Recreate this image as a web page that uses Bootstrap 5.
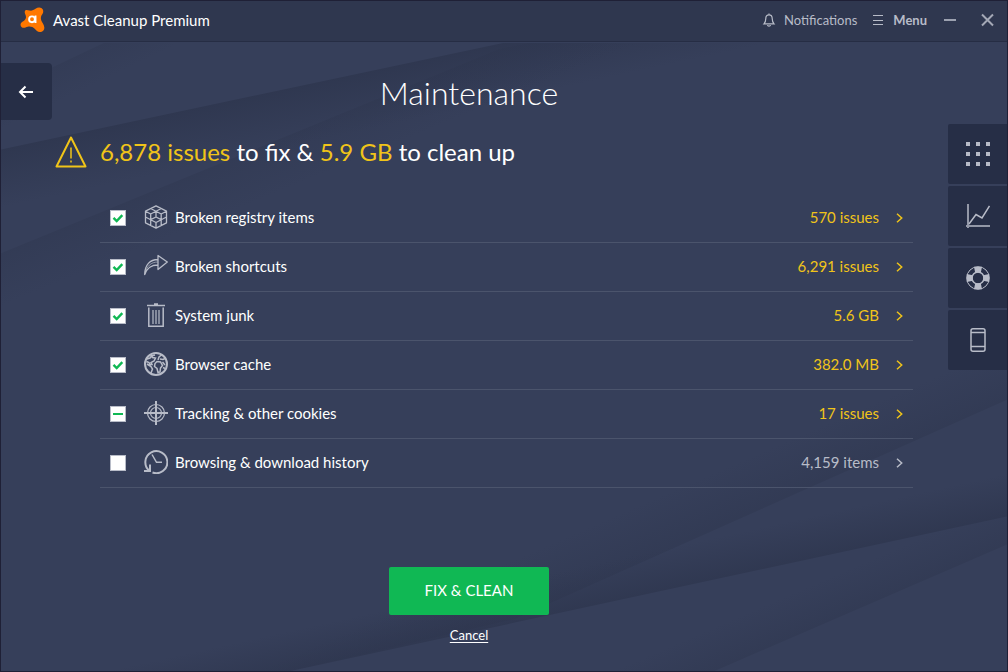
<!DOCTYPE html>
<html lang="en">
<head>
<meta charset="utf-8">
<meta name="viewport" content="width=device-width, initial-scale=1">
<title>Avast Cleanup Premium</title>
<link rel="stylesheet" href="https://cdn.jsdelivr.net/npm/bootstrap@5.3.0/dist/css/bootstrap.min.css">
<style>
  :root { --base: #363f5a; --bar: #2f374f; --tile: #262e46; --edge: #1f2036; --rule: #4b546c; --soft: #b8bcc8; --gold: #f0c419; --go: #10b854; }
  body { font-family: Lato, "Open Sans", sans-serif; font-size: 15px; line-height: 20px; color: #fff; background: var(--base); }
  .app-window { border: 1px solid var(--edge); background: var(--base); isolation: isolate; }
  .title-bar { background: var(--bar); border-bottom: 1px solid #262d44; height: 41px; padding: 0 13px 2px 19px; }
  .bar-btn { display: flex; align-items: center; padding: 0; border: 0; background: none; color: var(--soft); font-size: 13px; }
  .bar-menu { margin-left: 14px; }
  .backdrop { z-index: -1; }
  .back-btn { width: 51px; height: 57px; margin-top: 21px; padding: 0 2px 4px 0; border: 0; border-radius: 0 4px 4px 0; background: var(--tile); }
  .content { padding-top: 29px; }
  .page-title { margin: 0 62px 20px 0; font-size: 32px; line-height: 44px; font-weight: 300; }
  .summary { gap: 13px; height: 33px; margin: 0 0 26px 3px; font-size: 24px; line-height: 32px; font-weight: 400; }
  .gold { color: var(--gold); }
  .issues { margin: 0 35px 79px 48px; }
  .issue-row { height: 49px; padding: 0 10px; border-bottom: 1px solid var(--rule); }
  .issue-row .form-check-input { width: 16px; height: 16px; margin: 0 18px 0 0; border: 1px solid var(--soft); border-radius: 0; background-color: #fff; }
  .issue-row .form-check-input:checked { background-color: #fff; background-size: 14px; background-image: url("data:image/svg+xml,%3csvg xmlns='http://www.w3.org/2000/svg' viewBox='0 0 14 14'%3e%3cpath fill='none' stroke='%2310b854' stroke-width='2.400' d='m2.500 6.800 3.200 3.200 5.600-5.800'/%3e%3c/svg%3e"); }
  .issue-row .form-check-input:indeterminate { background-color: #fff; border-color: var(--soft); background-size: 14px; background-image: url("data:image/svg+xml,%3csvg xmlns='http://www.w3.org/2000/svg' viewBox='0 0 14 14'%3e%3cpath fill='none' stroke='%2310b854' stroke-width='2' d='M2 7h10'/%3e%3c/svg%3e"); }
  .issue-row label { gap: 7px; padding-bottom: 2px; }
  .issue-row a { gap: 17px; padding-bottom: 2px; color: var(--gold); }
  .issue-row a svg { margin-top: 2px; }
  .issue-row a.quiet { color: var(--soft); }
  .ic { fill: none; stroke: var(--soft); flex: none; }
  .actions { margin-right: 62px; gap: 10px; padding-bottom: 24px; }
  .fix-btn { width: 160px; height: 48px; padding: 0 0 2px; border-radius: 2px; background: var(--go); color: #fff; font-size: 15px; }
  .fix-btn:hover { background: #0fa84d; color: #fff; }
  .cancel-link { font-size: 13px; color: #fff; text-underline-offset: 2px; }
  .side-tabs { width: 59px; margin-top: 82px; gap: 2px; }
  .side-tabs button { height: 60px; border: 0; border-radius: 2px 0 0 2px; background: var(--tile); }
</style>
</head>
<body>
<div class="app-window min-vh-100 d-flex flex-column position-relative">
  <svg class="backdrop position-absolute top-0 start-0 w-100 h-100" viewBox="0 0 1008 672" preserveAspectRatio="none" aria-hidden="true">
    <defs>
      <linearGradient id="ga" gradientUnits="userSpaceOnUse" x1="0" y1="149" x2="12" y2="205"><stop stop-color="#2d354d" stop-opacity=".75"/><stop offset="1" stop-color="#2d354d" stop-opacity="0"/></linearGradient>
      <linearGradient id="gb" gradientUnits="userSpaceOnUse" x1="0" y1="253" x2="19" y2="299"><stop stop-color="#2d354d" stop-opacity=".35"/><stop offset="1" stop-color="#2d354d" stop-opacity="0"/></linearGradient>
      <linearGradient id="gc" gradientUnits="userSpaceOnUse" x1="1008" y1="400" x2="988" y2="354"><stop stop-color="#2d354d" stop-opacity=".4"/><stop offset="1" stop-color="#2d354d" stop-opacity="0"/></linearGradient>
      <linearGradient id="gd" gradientUnits="userSpaceOnUse" x1="1008" y1="517" x2="999" y2="476"><stop stop-color="#2d354d" stop-opacity=".7"/><stop offset="1" stop-color="#2d354d" stop-opacity="0"/></linearGradient>
      <linearGradient id="ge" gradientUnits="userSpaceOnUse" x1="1008" y1="545" x2="992" y2="508"><stop stop-color="#2d354d" stop-opacity=".4"/><stop offset="1" stop-color="#2d354d" stop-opacity="0"/></linearGradient>
      <linearGradient id="gf" gradientUnits="userSpaceOnUse" x1="0" y1="91" x2="15" y2="122"><stop stop-color="#2d354d" stop-opacity=".3"/><stop offset="1" stop-color="#2d354d" stop-opacity="0"/></linearGradient>
    </defs>
    <path fill="url(#gf)" d="M0 91 103 42H503L0 149z"/>
    <path fill="url(#ga)" d="M0 149 503 42H1008V300H0z"/>
    <path fill="url(#gb)" d="M0 253 500 48 530 42H1008V350H0z"/>
    <path fill="url(#gc)" d="M1008 400 514 620 290 672H0V300H1008z"/>
    <path fill="url(#gd)" d="M1008 517 290 672H0V400H1008z"/>
    <path fill="url(#ge)" d="M1008 545 715 672H290L1008 517z"/>
  </svg>

  <header class="title-bar d-flex align-items-center">
    <svg width="25" height="26" viewBox="0 0 25 26" class="me-2 flex-shrink-0" aria-hidden="true">
      <path fill="#ff7800" d="M5.500 3.200C6.500 2.600 7.800 3 9.500 3.500c2 .5 4-.2 6-1.700C17.500.3 20 0 21.700 1.300c2 1.500 2 4 .6 6-1.300 1.800-1.900 3.500-1 6.200.7 2.300 2.700 3.800 3 6.700.3 2.800-1.700 4.800-4.400 4.800-2.500 0-3.500-1.500-5.200-3.200-2-2-4.300-2.600-7-2-2.200.5-3.700 1.600-5.700.6-2-1.200-2-4 0-5.400 1.800-1.200 3.700-2 4-4.500.2-2.200-1.200-3.700-1.300-5.300 0-1 .3-1.600.8-2z"/>
      <ellipse cx="12" cy="12.300" rx="2.900" ry="2.900" fill="none" stroke="#fff" stroke-width="1.900"/>
      <path fill="none" stroke="#fff" stroke-width="1.900" d="M15.500 8.500v7.500"/>
    </svg>
    <span class="me-auto">Avast Cleanup Premium</span>
    <button type="button" class="bar-btn">
      <svg class="ic me-2" width="14" height="14" viewBox="0 0 14 14"><path stroke-width="1.200" d="M7 1.800c-2.300 0-3.200 1.500-3.200 3.700 0 3-.6 4-1.800 5.300h10c-1.200-1.300-1.800-2.300-1.800-5.300 0-2.200-.9-3.700-3.200-3.700zM7 .5v1.500M5.500 12c.3 1.500 2.700 1.500 3 0"/></svg>
      Notifications</button>
    <button type="button" class="bar-btn bar-menu fw-bold">
      <svg class="ic me-2" width="14" height="12" viewBox="0 0 14 12"><path d="M2 1.500h10M2 6.500h10M2 10.500h10"/></svg>
      Menu</button>
    <button type="button" class="bar-btn ms-3" aria-label="Minimize"><svg class="ic" width="14" height="14" viewBox="0 0 14 14"><path stroke-width="2" stroke-opacity=".8" d="M1 7h12"/></svg></button>
    <button type="button" class="bar-btn ms-4" aria-label="Close"><svg class="ic" width="13" height="14" viewBox="0 0 13 14"><path stroke-width="2" stroke-opacity=".85" d="m1 1.500 11 11m0-11-11 11"/></svg></button>
  </header>

  <main class="d-flex flex-grow-1">
    <button type="button" class="back-btn flex-shrink-0" aria-label="Back">
      <svg width="16" height="14" viewBox="0 0 16 14" fill="none" stroke="#fff" stroke-width="2"><path d="M15 7H2M7.500 1.500 2 7l5.500 5.500"/></svg>
    </button>

    <section class="content flex-grow-1 d-flex flex-column">
      <h1 class="page-title text-center">Maintenance</h1>
      <h2 class="summary d-flex align-items-center">
        <svg width="32" height="32" viewBox="0 0 32 32" fill="none" stroke="#f0c419" stroke-width="2" class="flex-shrink-0" aria-hidden="true"><path stroke-linejoin="round" d="M16 1.500 1.500 30.500h29z"/><path stroke-width="1.500" d="M16 11.500v11M16 24.500v2"/></svg>
        <span><span class="gold">6,878 issues</span> to fix &amp; <span class="gold">5.9 GB</span> to clean up</span>
      </h2>

      <div class="issues">
        <div class="issue-row d-flex align-items-center">
          <input class="form-check-input" type="checkbox" id="registry" checked>
          <label for="registry" class="d-flex align-items-center flex-grow-1">
            <svg class="ic" width="24" height="24" viewBox="0 0 24 24"><path stroke-width="1.300" stroke-linejoin="round" d="M12 .8 22.500 6.200v11.600L12 23.200 1.500 17.800V6.200zM6.700 3.500 17.200 9v11.500M17.300 3.500 6.700 9v11.500M1.500 6.200 6.700 9M22.500 6.200 17.200 9M1.500 12l10.500 5.500L22.500 12M12 17.500v5.700M12 6.300V12M6.700 14.700 12 12l5.200 2.700"/></svg>
            Broken registry items</label>
          <a href="#registry" class="d-flex align-items-center text-decoration-none">570 issues <svg width="7" height="10" viewBox="0 0 7 10" fill="none" stroke="currentColor" stroke-width="1.500"><path d="m1 .8 4.700 4.200L1 9.200"/></svg></a>
        </div>
        <div class="issue-row d-flex align-items-center">
          <input class="form-check-input" type="checkbox" id="shortcuts" checked>
          <label for="shortcuts" class="d-flex align-items-center flex-grow-1">
            <svg class="ic" width="24" height="24" viewBox="0 0 24 24"><path stroke-width="1.300" stroke-linejoin="round" d="M14 1.500v14l9.300-7.500zM14 5.500C6 5.500.8 11 .7 20.500c2.300-6 5.500-9.500 13.300-9.500"/><path stroke-opacity=".7" stroke-width="1" d="M14 8C7 8 2.500 12 .7 20.500"/></svg>
            Broken shortcuts</label>
          <a href="#shortcuts" class="d-flex align-items-center text-decoration-none">6,291 issues <svg width="7" height="10" viewBox="0 0 7 10" fill="none" stroke="currentColor" stroke-width="1.500"><path d="m1 .8 4.700 4.200L1 9.200"/></svg></a>
        </div>
        <div class="issue-row d-flex align-items-center">
          <input class="form-check-input" type="checkbox" id="junk" checked>
          <label for="junk" class="d-flex align-items-center flex-grow-1">
            <svg class="ic" width="24" height="24" viewBox="0 0 24 24"><path stroke-width="1.500" d="M3 2.500h18M4.800 4.500v18.700h14.400V4.500M10 1h4"/><path stroke-opacity=".6" stroke-width="2" d="M9 7v14M12 7v14M15 7v14"/></svg>
            System junk</label>
          <a href="#junk" class="d-flex align-items-center text-decoration-none">5.6 GB <svg width="7" height="10" viewBox="0 0 7 10" fill="none" stroke="currentColor" stroke-width="1.500"><path d="m1 .8 4.700 4.200L1 9.200"/></svg></a>
        </div>
        <div class="issue-row d-flex align-items-center">
          <input class="form-check-input" type="checkbox" id="cache" checked>
          <label for="cache" class="d-flex align-items-center flex-grow-1">
            <svg class="ic" width="24" height="24" viewBox="0 0 24 24"><circle cx="12" cy="12" r="11" stroke-width="2"/><path stroke-width="1.500" d="m3 7 3-1 1.500-2L11 3M7 2.500l1.500 3 3 .5-1.500 3-3 1.500 1 2H6l-1-2-2.500-1M3 12l4 2.500 1.500 2.500-1.500 4M11 11.500l2-2 3.500.5 2 3.500-2 2.500-.5 4-2 .5-1-4-2.500-2zM14 8l1-3 3-2.500M16 7l3 .5 2-1M18.500 10l2.500 3M19 15.500l2 1"/></svg>
            Browser cache</label>
          <a href="#cache" class="d-flex align-items-center text-decoration-none">382.0 MB <svg width="7" height="10" viewBox="0 0 7 10" fill="none" stroke="currentColor" stroke-width="1.500"><path d="m1 .8 4.700 4.200L1 9.200"/></svg></a>
        </div>
        <div class="issue-row d-flex align-items-center">
          <input class="form-check-input" type="checkbox" id="cookies">
          <label for="cookies" class="d-flex align-items-center flex-grow-1">
            <svg class="ic" width="24" height="24" viewBox="0 0 24 24"><circle cx="12" cy="12" r="8.500" stroke-width="1.200"/><circle cx="12" cy="12" r="5.500" stroke-width="1.200"/><path stroke-width="2" d="M12 0v24M0 12h24"/></svg>
            Tracking &amp; other cookies</label>
          <a href="#cookies" class="d-flex align-items-center text-decoration-none">17 issues <svg width="7" height="10" viewBox="0 0 7 10" fill="none" stroke="currentColor" stroke-width="1.500"><path d="m1 .8 4.700 4.200L1 9.200"/></svg></a>
        </div>
        <div class="issue-row d-flex align-items-center">
          <input class="form-check-input" type="checkbox" id="history">
          <label for="history" class="d-flex align-items-center flex-grow-1">
            <svg class="ic" width="24" height="24" viewBox="0 0 24 24"><path stroke-width="2" d="M5.500 20.800A11 11 0 1 1 8.500 22.500M0 21h6v-6.500"/><path stroke-width="1.500" d="m8 4.500 4.500 7.800H18"/></svg>
            Browsing &amp; download history</label>
          <a href="#history" class="quiet d-flex align-items-center text-decoration-none">4,159 items <svg width="7" height="10" viewBox="0 0 7 10" fill="none" stroke="currentColor" stroke-width="1.500"><path d="m1 .8 4.700 4.200L1 9.200"/></svg></a>
        </div>
      </div>

      <div class="actions d-flex flex-column align-items-center">
        <button type="button" class="btn fix-btn">FIX &amp; CLEAN</button>
        <a href="#" class="cancel-link">Cancel</a>
      </div>
    </section>

    <aside class="side-tabs d-flex flex-column flex-shrink-0">
      <button type="button" aria-label="Tools"><svg width="26" height="24" viewBox="0 0 26 24" fill="#b8bcc8"><path d="M1 0h4v4H1zM11 0h4v4h-4zM21 0h4v4h-4zM1 10h4v4H1zM11 10h4v4h-4zM21 10h4v4h-4zM1 20h4v4H1zM11 20h4v4h-4zM21 20h4v4h-4z"/></svg></button>
      <button type="button" aria-label="Statistics"><svg class="ic" width="24" height="24" viewBox="0 0 24 24"><path stroke-width="2" stroke-opacity=".75" d="M2 0v24M0 22h24"/><path stroke-width="1.500" d="M3 20 10 10.500l6 3.500 7.500-12"/></svg></button>
      <button type="button" aria-label="Rescue Center"><svg class="ic" width="24" height="24" viewBox="0 0 24 24"><circle cx="12" cy="12" r="11.300"/><circle cx="12" cy="12" r="6" stroke-width="1.500"/><path fill="#b8bcc8" stroke="none" d="M8 .8h8L14.800 6.800H9.200zM8 23.200h8L14.800 17.200H9.200zM.8 8v8L6.800 14.800V9.200zM23.200 8v8L17.200 14.800V9.200z"/></svg></button>
      <button type="button" aria-label="Mobile"><svg class="ic" width="16" height="24" viewBox="0 0 16 24"><rect x="1" y=".8" width="14" height="22.400" rx="2" stroke-width="1.500"/><path stroke-width="1.500" d="M1 4.500h14M1 18.500h14"/></svg></button>
    </aside>
  </main>
</div>
<script src="https://cdn.jsdelivr.net/npm/bootstrap@5.3.0/dist/js/bootstrap.bundle.min.js"></script>
<script>document.getElementById('cookies').indeterminate = true;</script>
</body>
</html>
